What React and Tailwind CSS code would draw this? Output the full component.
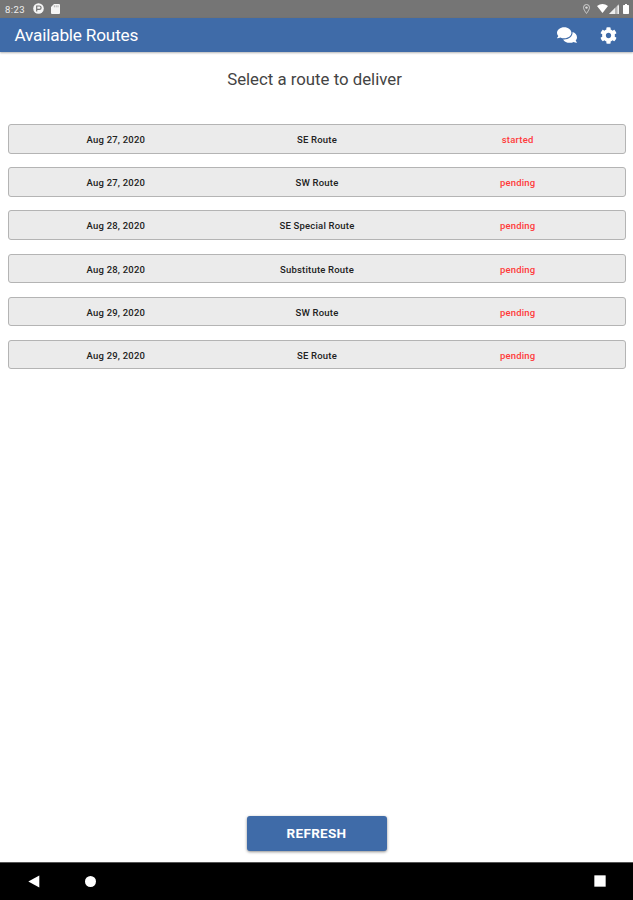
import { FaComments, FaCog } from "react-icons/fa";

const routes = [
  { date: "Aug 27, 2020", name: "SE Route", status: "started" },
  { date: "Aug 27, 2020", name: "SW Route", status: "pending" },
  { date: "Aug 28, 2020", name: "SE Special Route", status: "pending" },
  { date: "Aug 28, 2020", name: "Substitute Route", status: "pending" },
  { date: "Aug 29, 2020", name: "SW Route", status: "pending" },
  { date: "Aug 29, 2020", name: "SE Route", status: "pending" },
];

function StatusBar() {
  return (
    <div className="flex h-[17.5px] shrink-0 items-center justify-between bg-[#757575] pl-[5px] pr-1 text-[#eeeeee]">
      <div className="flex items-center">
        <span className="w-[28px] pt-px text-[9.5px] leading-none tracking-[0.4px]">8:23</span>
        <svg className="mr-[7px] size-[11px]" viewBox="0 0 11 11">
          <circle cx="5.5" cy="5.5" r="5.3" fill="#f5f5f5" />
          <path d="M3.7 8.6V3h2.7a1.7 1.7 0 0 1 0 3.4H4.2" fill="none" stroke="#757575" strokeWidth="1.2" />
        </svg>
        <svg className="h-[10px] w-[9px]" viewBox="0 0 9 10">
          <path d="M3 0h5q1 0 1 1v8q0 1-1 1H1q-1 0-1-1V3z" fill="#f5f5f5" />
          <path d="M3.4 1.3v2M5.2 1.3v2M7 1.3v2" stroke="#999999" strokeWidth=".7" />
        </svg>
      </div>
      <div className="flex items-center">
        <svg className="mr-[7px] h-[10px] w-[7px]" viewBox="0 0 7 10">
          <path d="M3.5.5a3 3 0 0 0-3 3c0 2 3 6 3 6s3-4 3-6a3 3 0 0 0-3-3z" fill="none" stroke="#d0d0d0" />
          <circle cx="3.5" cy="3.6" r="1.2" fill="#e0e0e0" />
        </svg>
        <svg className="mr-px h-[9px] w-[11px]" viewBox="0 0 11 9">
          <path d="M0 2q5.500-4 11 0L5.500 9z" fill="#ffffff" />
        </svg>
        <svg className="mr-[4px] h-[10px] w-[10px]" viewBox="0 0 10 10">
          <path d="M10 0v10H0z" fill="#b5b5b5" />
          <path d="M6 4v6H0zM8.500 1.500H10V10H8.500z" fill="#eeeeee" />
        </svg>
        <svg className="h-[10px] w-[6px]" viewBox="0 0 6 10">
          <path d="M2 0h2v1h1.300q.7 0 .7.7v7.600q0 .7-.7.7H.7Q0 10 0 9.300V1.700Q0 1 .7 1H2z" fill="#ffffff" />
        </svg>
      </div>
    </div>
  );
}

function Header() {
  return (
    <header className="flex h-[34.5px] shrink-0 items-center bg-[#3f6ba8] pl-[14.5px] pr-[16px] text-white shadow-[0_1px_2px_rgba(0,0,0,0.3)]">
      <h1 className="flex-1 pt-[2px] text-[17.2px] leading-none tracking-[-0.19px]">Available Routes</h1>
      <FaComments className="mr-[23px] mt-px size-[20px]" />
      <FaCog className="mt-[2px] size-[17px]" />
    </header>
  );
}

function RouteRow({ date, name, status }) {
  return (
    <li className="grid h-[29.5px] grid-cols-3 items-center rounded-[3px] border border-[#b4b4b4] bg-[#ebebeb] px-[7px] pt-[2px] text-center text-[9.500px] font-medium leading-none tracking-[0.2px] text-[#222222]">
      <span>{date}</span>
      <span className="pl-px">{name}</span>
      <span className="pl-px text-[#ff3b3b]">{status}</span>
    </li>
  );
}

function NavigationBar() {
  return (
    <nav className="flex h-[38.500px] shrink-0 items-center border-t border-[#555555] bg-black pl-[28px] pr-[27px]">
      <svg className="h-[13px] w-[12px]" viewBox="0 0 12 13">
        <path d="M11.300.5v12L.3 6.500z" fill="#ffffff" />
      </svg>
      <span className="ml-[45px] size-[11px] rounded-full bg-white" />
      <span className="ml-auto size-[12px] rounded-[1px] border border-[#aaaaaa] bg-white" />
    </nav>
  );
}

export default function App() {
  return (
    <div className="flex h-screen w-full flex-col overflow-hidden bg-white font-[Roboto,sans-serif]">
      <StatusBar />
      <Header />
      <main className="flex flex-1 flex-col px-[7.500px] pt-[17px]">
        <h2 className="pr-[4px] text-center text-[16.800px] leading-[20px] text-[#444444]">
          Select a route to deliver
        </h2>
        <ul className="mt-[35px] flex flex-col gap-[13.700px]">
          {routes.map((route, index) => (
            <RouteRow key={index} {...route} />
          ))}
        </ul>
        <button className="mb-[11px] mt-auto h-[35px] w-[140px] self-center rounded-[3px] bg-[#3f6ba8] pt-px text-[13.500px] font-bold leading-none tracking-[0.3px] text-white shadow-[0_1px_3px_rgba(0,0,0,0.45)]">
          REFRESH
        </button>
      </main>
      <NavigationBar />
    </div>
  );
}
